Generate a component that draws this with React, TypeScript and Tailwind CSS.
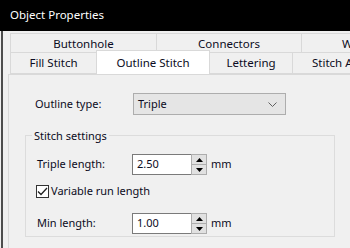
import React from 'react';

const font = { fontFamily: '"Noto Sans", "Open Sans", sans-serif' };

function Spinner() {
  return (
    <div className="flex flex-col w-[16px] h-[21px] border border-[#adadad] bg-[#e1e1e1]">
      <div className="flex-1 flex items-center justify-center border-b border-[#adadad]">
        <svg width="7" height="4" viewBox="0 0 7 4"><path d="M0 4 L3.5 0 L7 4 Z" fill="#000" /></svg>
      </div>
      <div className="flex-1 flex items-center justify-center">
        <svg width="7" height="4" viewBox="0 0 7 4"><path d="M0 0 L3.5 4 L7 0 Z" fill="#000" /></svg>
      </div>
    </div>
  );
}

function NumberRow({ label, value }: { label: string; value: string }) {
  return (
    <div className="flex items-center h-[21px]">
      <div className="w-[106px] pl-[11px] shrink-0">{label}</div>
      <div className="flex items-center">
        <div className="w-[59px] h-[21px] border border-r-0 border-[#7a7a7a] bg-white flex items-center pl-[4px]">
          {value}
        </div>
        <Spinner />
        <span className="ml-[4px]">mm</span>
      </div>
    </div>
  );
}

function Tab({ label, width, active }: { label: string; width?: string; active?: boolean }) {
  return (
    <div
      className={
        'flex items-center justify-center border border-[#d9d9d9] -ml-px first:ml-0 shrink-0 whitespace-nowrap ' +
        (active ? 'bg-white h-[24px] -mt-[2px] border-b-0 z-10' : 'bg-[#f0f0f0] h-[22px]') +
        ' ' + (width ?? 'flex-1')
      }
    >
      {label}
    </div>
  );
}

export default function App() {
  return (
    <div className="w-[350px] h-[248px] overflow-hidden bg-[#f0f0f0] text-[11px] text-[#0b0b22] flex flex-col" style={font}>
      <div className="h-[31px] shrink-0 bg-black text-white text-[11.5px] flex items-center pl-[10px] pb-px">
        Object Properties
      </div>
      <div className="flex-1 ml-[1px] border-l-2 border-[#4d4d4d] pl-[5px] pt-[2px]">
        <div className="pl-[2px] flex h-[20px] text-[11.5px]">
          <Tab label="Buttonhole" width="w-[147px]" />
          <Tab label="Connectors" width="w-[146px]" />
          <div className="flex items-center pl-[40px] h-[22px] border border-[#d9d9d9] -ml-px w-[100px] bg-[#f0f0f0] whitespace-nowrap">W</div>
        </div>
        <div className="pl-[2px] flex h-[22px] -mt-px items-end text-[11.5px]">
          <Tab label="Fill Stitch" width="w-[87px]" />
          <Tab label="Outline Stitch" width="w-[114px]" active />
          <Tab label="Lettering" width="w-[84px]" />
          <div className="flex items-center pl-[19px] h-[22px] border border-[#d9d9d9] -ml-px w-[100px] bg-[#f0f0f0] whitespace-nowrap">Stitch A</div>
        </div>
        <div className="border border-[#d9d9d9] bg-[#f0f0f0] h-[200px] w-[360px] pl-[16px] pt-[18px]">
          <div className="flex items-center h-[22px]">
            <div className="w-[108px] pl-[10px] shrink-0">Outline type:</div>
            <div className="w-[153px] h-[22px] border border-[#adadad] bg-[#e5e5e5] flex items-center justify-between pl-[4px] pr-[8px]">
              <span>Triple</span>
              <svg width="9" height="5" viewBox="0 0 9 5"><path d="M0.5 0.5 L4.5 4.5 L8.5 0.5" fill="none" stroke="#606060" strokeWidth="1" /></svg>
            </div>
          </div>
          <fieldset className="mt-[12px] w-[310px] border border-[#dcdcdc] pb-[2px]">
            <legend className="ml-[6px] px-[2px] leading-[17px]">Stitch settings</legend>
            <div className="mt-[10px]">
              <NumberRow label="Triple length:" value="2.50" />
            </div>
            <div className="mt-[9px] flex items-center h-[14px] pl-[10px]">
              <div className="w-[13px] h-[13px] border border-[#333] bg-white flex items-center justify-center">
                <svg width="11" height="9" viewBox="0 0 11 9"><path d="M1 4.5 L4 7.5 L10 1" fill="none" stroke="#222" strokeWidth="1.3" /></svg>
              </div>
              <span className="ml-[2px]">Variable run length</span>
            </div>
            <div className="mt-[15px]">
              <NumberRow label="Min length:" value="1.00" />
            </div>
          </fieldset>
        </div>
      </div>
    </div>
  );
}
